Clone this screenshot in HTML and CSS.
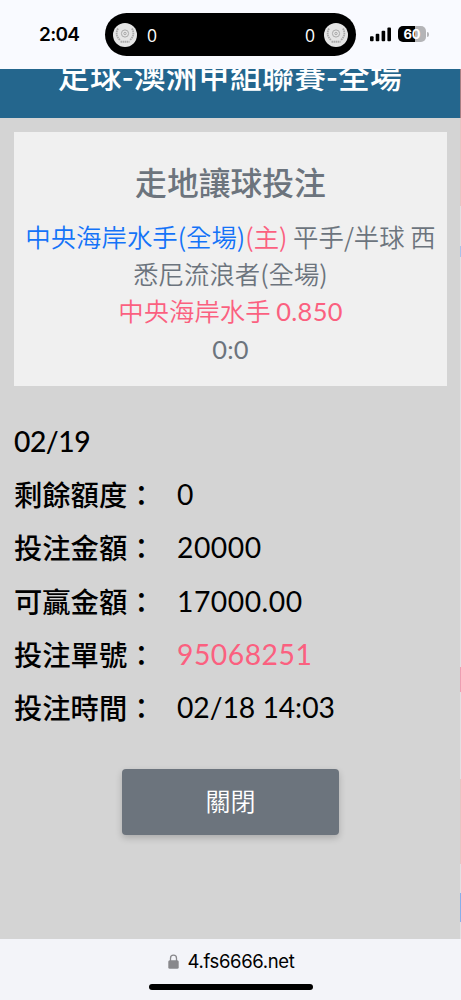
FILE: index.html
```html
<!DOCTYPE html>
<html lang="zh-Hant">
<head>
<meta charset="utf-8">
<meta name="viewport" content="width=device-width, initial-scale=1">
<title>足球-澳洲甲組聯賽-全場</title>
<link rel="stylesheet" href="styles.css">
</head>
<body>
<div class="screen">
  <header class="status">
    <span class="clock">2:04</span>
    <div class="island">
      <svg class="crest" viewBox="0 0 24 24"><circle cx="12" cy="12" r="12" fill="#e5e5e5"/><g fill="none" stroke="#aaa"><circle cx="12" cy="10.5" r="3.6"/><circle cx="12" cy="10.5" r="1.2"/><path d="M5 5.5Q1.5 12 7 17M19 5.5Q22.5 12 17 17" stroke-width="1.8" stroke-dasharray="1.6 .6"/><path d="M7.5 18.8h9" stroke-width="2" stroke-dasharray="1.6 .5"/></g></svg>
      <span class="score">0</span>
      <span class="score score-away">0</span>
      <svg class="crest" viewBox="0 0 24 24"><circle cx="12" cy="12" r="12" fill="#e5e5e5"/><g fill="none" stroke="#aaa"><circle cx="12" cy="10.5" r="3.6"/><circle cx="12" cy="10.5" r="1.2"/><path d="M5 5.5Q1.5 12 7 17M19 5.5Q22.5 12 17 17" stroke-width="1.8" stroke-dasharray="1.6 .6"/><path d="M7.5 18.8h9" stroke-width="2" stroke-dasharray="1.6 .5"/></g></svg>
    </div>
    <svg class="signal" viewBox="0 0 22 15"><rect x="0" y="9.3" width="3.6" height="5" rx="1"/><rect x="5.7" y="6.8" width="3.6" height="7.5" rx="1"/><rect x="11.6" y="3.8" width="3.6" height="10.5" rx="1"/><rect x="17.4" y=".6" width="3.6" height="13.7" rx="1"/></svg>
    <div class="battery"><span class="level">60</span><i class="nub"></i></div>
  </header>

  <div class="page">
    <main class="dialog">
      <h1 class="league"><span>足球-澳洲甲組聯賽-全場</span></h1>
      <section class="card">
        <h2 class="card-title">走地讓球投注</h2>
        <p class="match"><span class="blue">中央海岸水手(全場)</span><span class="pink">(主)</span> 平手/半球 西<br>悉尼流浪者(全場)</p>
        <p class="match pink">中央海岸水手 <span class="num">0.850</span></p>
        <p class="match num">0:0</p>
      </section>
      <dl class="details">
        <div class="row"><dt class="date">02/19</dt></div>
        <div class="row"><dt>剩餘額度：</dt><dd>0</dd></div>
        <div class="row"><dt>投注金額：</dt><dd>20000</dd></div>
        <div class="row"><dt>可贏金額：</dt><dd>17000.00</dd></div>
        <div class="row"><dt>投注單號：</dt><dd class="pink">95068251</dd></div>
        <div class="row"><dt>投注時間：</dt><dd class="time">02/18 14:03</dd></div>
      </dl>
      <button class="close" type="button">關閉</button>
    </main>
    <div class="edge"></div>
  </div>

  <footer class="browser">
    <div class="address">
      <svg class="lock" viewBox="0 0 11 15"><path d="M2.5 7V4.2a3 3 0 0 1 6 0V7" fill="none" stroke="#88888c" stroke-width="1.3"/><rect x=".3" y="6.2" width="10.4" height="8.6" rx="1.5" fill="#88888c"/></svg>
      <span>4.fs6666.net</span>
    </div>
    <i class="home"></i>
  </footer>
</div>
</body>
</html>
```
FILE: styles.css
```css
* { box-sizing: border-box; }
body { margin: 0; }
h1, h2, p, dl, dt, dd { margin: 0; }
.screen {
  width: 461px;
  height: 1000px;
  display: flex;
  flex-direction: column;
  overflow: hidden;
  font-family: "Noto Sans CJK TC", sans-serif;
}
.status {
  flex: none;
  height: 69px;
  padding-top: 13px;
  display: flex;
  align-items: flex-start;
  background: #f9faff;
}
.clock {
  width: 66px;
  margin-left: 39px;
  font: 600 19px/43px Inter, sans-serif;
  letter-spacing: -.7px;
}
.island {
  width: 251px;
  height: 43px;
  padding: 0 8px;
  display: flex;
  align-items: center;
  border-radius: 22px;
  background: #000;
}
.crest { width: 24px; height: 24px; }
.score { margin-left: 10px; color: #fff; font: 17.5px/44px "Open Sans", sans-serif; }
.score-away { margin-left: auto; margin-right: 9px; }
.signal { width: 22px; height: 15px; margin: 14px 0 0 14px; }
.battery { display: flex; align-items: center; margin: 13px 0 0 6px; }
.level {
  width: 28px;
  height: 16px;
  border-radius: 5px;
  background: linear-gradient(90deg, #000 60%, #b4b4b7 60%);
  color: #fff;
  text-align: center;
  font: 700 13px/16px Inter, sans-serif;
}
.nub { width: 2px; height: 5px; margin-left: 1px; border-radius: 0 2px 2px 0; background: #b4b4b7; }
.page { flex: none; height: 870px; display: flex; background: #d4d4d4; }
.dialog { width: 460px; height: 870px; }
.edge {
  width: 1px;
  background: linear-gradient(#a77f83 0 49px, #e4c6c3 49px 137px, #e1e1e3 137px 177px, #a8c2e9 177px 188px, #e1e1e3 188px 598px, #ed9eb2 598px 623px, #e1e1e3 623px 710px, #e4c6c3 710px 795px, #e1e1e3 795px 824px, #89afe9 824px 853px, #e1e1e3 853px);
}
.league {
  height: 49px;
  overflow: hidden;
  background: #24668d;
  color: #fff;
  text-align: center;
  font: 500 31.8px/46px "Noto Sans CJK TC", sans-serif;
  letter-spacing: .3px;
}
.league span { display: block; margin-top: -18px; }
.card {
  width: 433px;
  height: 254px;
  margin: 14px 0 0 14px;
  padding-top: 26px;
  background: #f0f0f0;
  color: #6c747d;
  text-align: center;
}
.card-title { font-size: 31.8px; font-weight: 500; line-height: 46px; margin-bottom: 14px; }
.match { font-size: 25.4px; font-weight: 350; line-height: 37.2px; white-space: nowrap; }
.num { font-family: Lato, sans-serif; font-weight: 400; letter-spacing: .3px; }
.blue { color: #1473f8; }
.pink { color: #fb607f; }
.details { padding: 28px 0 0 14px; }
.row { display: flex; height: 53.3px; align-items: center; font-size: 28.3px; line-height: 40px; }
dt { width: 163px; font-weight: 500; white-space: nowrap; }
.date, dd { font-family: Lato, sans-serif; letter-spacing: .5px; }
.date { letter-spacing: -.5px; }
.time { letter-spacing: -.05px; }
.close {
  display: block;
  width: 217px;
  height: 66px;
  margin: 35px 0 0 122px;
  border: 0;
  border-radius: 4px;
  background: #6c747d;
  box-shadow: 0 3px 7px #0003;
  color: #fff;
  font: 350 25px/62px "Noto Sans CJK TC", sans-serif;
  padding: 0 0 4px;
}
.browser {
  flex: none;
  height: 61px;
  display: flex;
  flex-direction: column;
  align-items: center;
  background: #f3f4f9;
}
.address {
  display: flex;
  align-items: center;
  gap: 8px;
  height: 45px;
  margin-right: -2px;
  font: 18.5px/45px Inter, sans-serif;
  letter-spacing: -.35px;
}
.lock { width: 11px; height: 15px; }
.home { width: 164px; height: 6px; border-radius: 3px; background: #000; }
```
